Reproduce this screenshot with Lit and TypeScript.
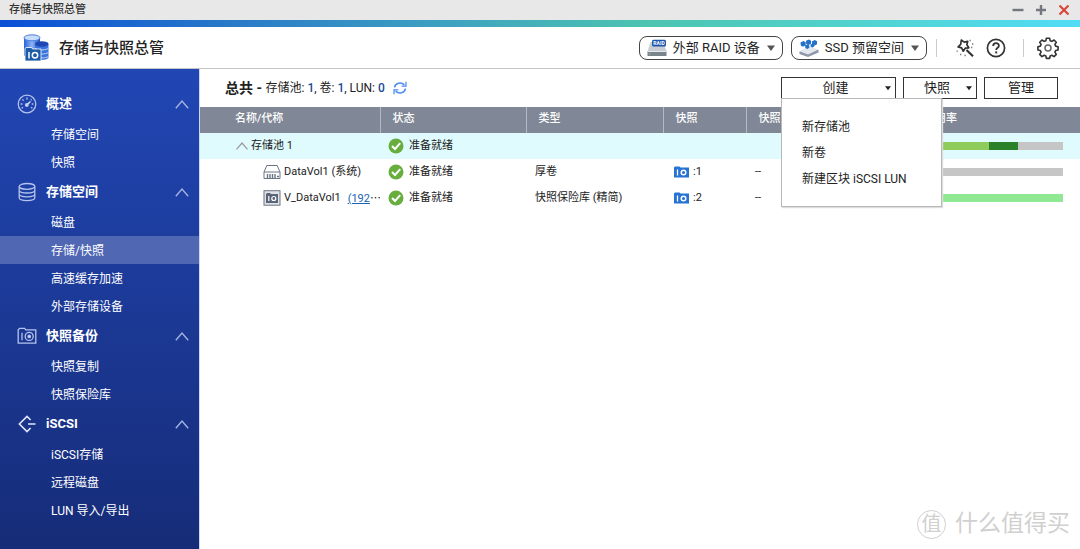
import { LitElement, html, css, svg, nothing } from "lit";
import { customElement, state } from "lit/decorators.js";

interface NavGroup {
  title: string;
  icon: unknown;
  items: string[];
}

interface Row {
  kind: "pool" | "volume" | "vault";
  name: string;
  alias?: string;
  status: string;
  type?: string;
  snapshots?: number;
  reserved?: string;
  bars: { color: string; width: number }[];
}

const gauge = svg`<svg width="20" height="20" viewBox="0 0 20 20" fill="none" stroke="#b4c3ec" stroke-width="1.3">
  <circle cx="10" cy="10" r="8.8"/><path d="M3.6 10h1.8M5.4 5.4l1.2 1.2M10 3.6v1.8M14.6 5.4l-.8.9M16.4 10h-1.6M6 13.4l-1.4.8M14 13.4l1.4.8"/>
  <circle cx="9.8" cy="11" r="1.3" fill="#dfe6fa"/><path d="M10.5 10.2l3-2.8" stroke="#dfe6fa"/></svg>`;

const disks = svg`<svg width="20" height="20" viewBox="0 0 20 20" fill="none" stroke="#b4c3ec" stroke-width="1.3">
  <ellipse cx="10" cy="4.4" rx="7.8" ry="2.9"/>
  <path d="M2.2 4.4v11.4c0 1.6 3.5 2.8 7.8 2.8s7.8-1.2 7.8-2.8V4.4M2.2 8.2c0 1.6 3.5 2.8 7.8 2.8s7.8-1.2 7.8-2.8M2.2 12c0 1.6 3.5 2.8 7.8 2.8s7.8-1.2 7.8-2.8"/></svg>`;

const camera = svg`<svg width="20" height="20" viewBox="0 0 20 20" fill="none" stroke="#b4c3ec" stroke-width="1.3">
  <path d="M1.2 17.2V3.8l1.4-1.4h5l1.2 1.4h10v13.4z"/><path d="M5 6.8v7.4"/>
  <circle cx="12.2" cy="10.4" r="4"/><circle cx="12.2" cy="10.4" r="1.2" fill="#dfe6fa"/></svg>`;

const iscsi = svg`<svg width="20" height="20" viewBox="0 0 20 20" fill="none" stroke="#dfe6fa" stroke-width="1.6">
  <path d="M13.6 6L10 2.4 2.4 10l7.600 7.600 3.600-3.600M11 10h7.500"/></svg>`;

const chevron = (w: number, h: number, color: string) => svg`<svg width=${w} height=${h} viewBox="0 0 12 8" fill="none" stroke=${color} stroke-width="1.2"><path d="M.5 7.3L6 1l5.5 6.3"/></svg>`;

const caret = (w: number) => svg`<svg width=${w} height=${w} viewBox="0 0 8 8" fill="currentColor"><path d="M0 1.500h8L4 7z"/></svg>`;

const appLogo = svg`<svg width="26" height="28" viewBox="0 0 26 28">
  <defs><linearGradient id="a" x1="0" x2="1"><stop offset="0" stop-color="#2a62d8"/><stop offset=".5" stop-color="#8cb4f6"/><stop offset="1" stop-color="#2450c4"/></linearGradient></defs>
  <path d="M1 3.5v18c2 2 14 2 16 0v-18z" fill="url(#a)"/><ellipse cx="9" cy="3.8" rx="8" ry="3" fill="#c7dbfb" stroke="#4b7fe0"/>
  <path d="M12 10v14c2 2.5 11.5 2.5 13.5 0V10z" fill="#3c74de"/><ellipse cx="18.7" cy="10" rx="6.8" ry="2.7" fill="#1f48b4"/>
  <path d="M12 14.5c3 2 10 2 13.5 0M12 18.5c3 2 10 2 13.5 0M12 22.5c3 2 10 2 13.5 0" fill="none" stroke="#b9d0f8"/>
  <path d="M2 15l1-1.5h5.5l1 1.5H18v12H2z" fill="#1a5ca6" stroke="#fff" stroke-width=".8"/>
  <path d="M6 18v6.5" stroke="#fff" stroke-width="1.5"/><circle cx="12" cy="21.2" r="2.7" fill="none" stroke="#fff" stroke-width="1.5"/></svg>`;

const raidIcon = svg`<svg width="20" height="18" viewBox="0 0 20 18">
  <path d="M3.5 3h13l3 9.5H.5z" fill="#c9cdd3"/><path d="M.5 12.300h19v4.700H.5z" fill="#7b838d"/><path d="M1 12.500h18" stroke="#e6e9ed"/>
  <circle cx="2.8" cy="14.9" r=".7" fill="#8fe05a"/><rect x="5" y=".8" width="14" height="6.800" rx="1.5" fill="#1c56ac"/>
  <text x="12" y="6.100" text-anchor="middle" font-family="Roboto, sans-serif" font-weight="700" font-size="5" fill="#fff">RAID</text></svg>`;

const ssdIcon = svg`<svg width="20" height="18" viewBox="0 0 20 18">
  <path d="M.5 12.500L10 8l9.500 3v2.500L9 18l-8.500-3z" fill="#8e97a8"/><path d="M.5 12.300L10 7.500l9.500 3L9 15.500z" fill="#e3e7ee"/>
  <path d="M1.500 3.500l3-1.500 2.200 1.300v3L4 7.800 1.800 6.500zM7 1.800L10 .5l2 1.300v3L9.500 6 7.200 5zM12.800 2.500l3-1.500L18 2.300v3l-2.500 1.400-2.300-1.200zM6.200 6.500l2.300-1 1.800 1v2.300L8.300 10l-2-1zM11.500 5.500l2-.8 1.500 1v2l-1.800.8-1.600-.9z" fill="#2371c8"/></svg>`;

const wand = svg`<svg width="20" height="20" viewBox="0 0 20 20" fill="none" stroke="#333" stroke-width="1.7" stroke-linejoin="round">
  <path d="M6.300 2l2.900 2.100 3.500-.8-.8 3.500 1.900 3-3.600.4-2 3-1.600-3.300-3.500-1 2.600-2.600z"/><path d="M11.500 12l6.500 6.200" stroke-width="2.2"/>
  <path d="M14.500 2.500h1.300M17 6h1.300M16 9.500h1.300M1.5 13.200h1.300M5 16.500h1.300M9.500 17.500h1.300" stroke="#777" stroke-width="1.3"/></svg>`;

const help = svg`<svg width="20" height="20" viewBox="0 0 20 20" fill="none" stroke="#333" stroke-width="1.7">
  <circle cx="10" cy="10" r="8.6"/><path d="M7.200 8c0-3.700 5.700-3.600 5.700-.3 0 2-2.700 2.200-2.700 4.300" stroke-width="1.8"/><path d="M9.200 14.400h2" stroke-width="2"/></svg>`;

const gear = svg`<svg width="24" height="24" viewBox="0 0 24 24" fill="none" stroke="#333" stroke-width="1.8" stroke-linejoin="round">
  <path d="M10.200 1.800h3.600l.6 2.700 1.900.8 2.400-1.500 2.500 2.500-1.500 2.400.8 1.900 2.700.6v3.600l-2.700.6-.8 1.900 1.500 2.400-2.500 2.500-2.400-1.500-1.900.8-.6 2.700h-3.600l-.6-2.700-1.900-.8-2.400 1.500-2.500-2.500 1.500-2.400-.8-1.900-2.700-.6v-3.600l2.700-.6.8-1.900-1.500-2.400 2.500-2.500 2.400 1.500 1.900-.8z" transform="translate(1.200 .6) scale(.9)"/>
  <circle cx="12" cy="12" r="3" stroke="#666" stroke-width="1.500"/></svg>`;

const refresh = svg`<svg width="14" height="14" viewBox="0 0 14 14" fill="none" stroke="#4d8df0" stroke-width="1.6">
  <path d="M1.600 6.300C2 2.500 8 .2 11.400 4M12.400 7.700C12 11.500 6 13.800 2.600 10"/><path d="M13 .8v4.400H8.600M1 13.200V8.800h4.400" stroke-width="1.3"/></svg>`;

const check = svg`<svg width="16" height="16" viewBox="0 0 16 16"><circle cx="8" cy="8" r="7.5" fill="#67ae3f"/>
  <path d="M4 8l3 3 5.200-5.800" fill="none" stroke="#fff" stroke-width="2"/></svg>`;

const volumeIcon = svg`<svg width="18" height="16" viewBox="0 0 18 16" fill="none" stroke="#6d7585">
  <path d="M1 8l2.800-6.500h10.400L17 8v6.500H1z"/><path d="M1 8h16"/><path d="M4.500 10v4M7 10v4M9.500 10v4M12 10v4" stroke-width="1.4"/><path d="M14 12.500h2" stroke-width="1.4"/></svg>`;

const vaultIcon = svg`<svg width="18" height="16" viewBox="0 0 18 16" fill="none">
  <rect x="1" y=".7" width="16" height="14.5" fill="#dfe2e8" stroke="#6d7585"/><path d="M3 4l1-1h3l1 1h7v9H3z" fill="#5b6578"/>
  <path d="M5.800 6v5" stroke="#fff" stroke-width="1.2"/><circle cx="10.8" cy="8.5" r="2" stroke="#fff" stroke-width="1.2"/></svg>`;

const snapIcon = svg`<svg width="15" height="12" viewBox="0 0 15 12" fill="none"><path d="M0 1.500L1 .5h4.500l1 1H15v10H0z" fill="#2673d4"/>
  <path d="M3.500 3.500v6" stroke="#fff" stroke-width="1.3"/><circle cx="9.5" cy="6.5" r="2.3" stroke="#fff" stroke-width="1.5"/></svg>`;

const NAV: NavGroup[] = [
  { title: "概述", icon: gauge, items: ["存储空间", "快照"] },
  { title: "存储空间", icon: disks, items: ["磁盘", "存储/快照", "高速缓存加速", "外部存储设备"] },
  { title: "快照备份", icon: camera, items: ["快照复制", "快照保险库"] },
  { title: "iSCSI", icon: iscsi, items: ["iSCSI存储", "远程磁盘", "LUN 导入/导出"] },
];

const ROWS: Row[] = [
  {
    kind: "pool", name: "存储池 1", status: "准备就绪",
    bars: [{ color: "#8fcc5c", width: 49 }, { color: "#2b8127", width: 20 }],
  },
  { kind: "volume", name: "DataVol1 (系统)", status: "准备就绪", type: "厚卷", snapshots: 1, reserved: "--", bars: [] },
  {
    kind: "vault", name: "V_DataVol1", alias: "(192", status: "准备就绪", type: "快照保险库 (精简)", snapshots: 2, reserved: "--",
    bars: [{ color: "#90e892", width: 100 }],
  },
];

@customElement("app-root")
export class AppRoot extends LitElement {
  @state() private menuOpen = true;
  @state() private active = "存储/快照";

  static styles = css`
    :host {
      display: flex;
      flex-direction: column;
      min-height: 100vh;
      box-sizing: border-box;
      position: relative;
      background: #fff;
      color: #222;
      font: 12px/20px Roboto, "Noto Sans CJK SC", sans-serif;
    }
    * { box-sizing: border-box; }
    svg { display: block; flex: none; }
    button { font: inherit; color: inherit; background: none; border: 0; padding: 0; cursor: pointer; }
    .titlebar {
      display: flex; align-items: center; justify-content: space-between;
      height: 20px; padding: 0 10px 0 9px; background: #e8e8e8; font-weight: 500; font-size: 11px; line-height: 22px; color: #333;
    }
    .window { display: flex; gap: 11px; }
    .stripe { height: 7px; background: linear-gradient(90deg, #0a4ed6 0%, #2a7bc8 22%, #3fa3c0 42%, #4cc4b0 60%, #50d2cc 78%, #52dcf6 100%); }
    header { display: flex; align-items: center; height: 42px; padding: 0 20px 0 23px; border-bottom: 1px solid #c4c4c8; }
    h1 { margin: 0 auto 0 10px; font-size: 15px; font-weight: 500; line-height: 20px; }
    .pill {
      display: flex; align-items: center; height: 24px; margin-right: 8px; padding: 0 7px;
      border: 1px solid #444; border-radius: 8px; font-size: 13px; white-space: nowrap;
    }
    .pill span { margin: 0 7px 0 6px; }
    .pill svg:last-child { color: #555; }
    .sep { width: 1px; height: 18px; background: #ccc; }
    .tools { display: flex; align-items: center; }
    .tools .sep:first-child { margin: 0 18px 0 1px; }
    .tools .help { margin: 0 17px 0 11px; }
    .tools .gear { margin-left: 12px; }
    .body { display: flex; flex: 1; }
    nav { flex: none; width: 200px; padding-top: 19px; background: linear-gradient(#2146b4, #162c78); border-right: 1px solid #ccd8f4; color: #fff; }
    .group { display: flex; align-items: center; width: 100%; height: 32px; padding: 0 10px 0 17px; font-size: 13px; font-weight: 700; text-align: left; }
    .group span { flex: 1; margin-left: 9px; }
    nav a { display: block; height: 28px; padding: 1px 0 0 51px; line-height: 28px; color: #fff; text-decoration: none; }
    nav a.on { background: #5067b4; }
    main { flex: 1; min-width: 0; }
    .bar { display: flex; align-items: center; height: 38px; padding: 0 22px 0 25px; }
    .bar p { display: flex; align-items: center; margin: 0 auto 0 0; white-space: pre; }
    .bar strong { font-size: 14px; font-weight: 700; }
    .bar b { font-weight: 500; color: #1c4a94; }
    .bar p button { margin-left: 8px; }
    .menu-wrap { position: relative; margin-right: 7px; }
    .btn { display: flex; align-items: center; height: 22px; width: 74px; border: 1px solid #333; background: #fff; font-size: 13px; padding: 0 4px; }
    .btn span { flex: 1; }
    .wide { width: 115px; }
    .gap { margin-right: 7px; }
    .menu {
      position: absolute; z-index: 2; top: 21px; left: 0; width: 161px; margin: 0; padding: 15px 0 14px; list-style: none;
      background: #fff; border: 1px solid #b8b8b8; box-shadow: 1px 1px 1px #ddd;
    }
    .menu button { display: block; width: 100%; height: 26px; padding-left: 20px; text-align: left; white-space: nowrap; }
    table { width: 100%; border-collapse: collapse; table-layout: fixed; font-size: 11px; }
    tr { height: 26px; }
    th, td { padding: 0 0 0 9px; text-align: left; white-space: nowrap; overflow: hidden; }
    th { padding: 0 0 2px 12px; background: #808796; color: #fff; font-weight: 500; border-left: 1px solid #b4b9c4; }
    th:first-child { padding-left: 35px; border-left: 0; }
    th:last-child { padding-left: 15px; border-left: 0; }
    .c1 { width: 180px; } .c2 { width: 146px; } .c3 { width: 137px; } .c4 { width: 83px; } .c5 { width: 163px; }
    .pool { background: #e0fbfd; }
    .cell { display: flex; align-items: center; gap: 3px; }
    td:first-child { padding-left: 63px; }
    .pool td:first-child { padding-left: 36px; }
    td:nth-child(2) { padding-left: 8px; }
    td:nth-child(2) .cell { gap: 5px; }
    td:nth-child(4) { padding-left: 11px; }
    .snap { gap: 4px; }
    .alias { margin-left: 4px; }
    .alias i { font-family: "Noto Sans CJK SC", sans-serif; font-style: normal; }
    .cell a { color: #1a63b4; }
    .meter { display: flex; height: 8px; margin-right: 17px; background: #c6c6c6; }
    .mark { position: absolute; right: 10px; bottom: 9px; display: flex; align-items: center; gap: 9px; color: #d0d0d0; font-size: 23px; line-height: 32px; }
    .mark i { width: 29px; height: 29px; border: 1px solid #d0d0d0; border-radius: 50%; font-size: 20px; font-style: normal; line-height: 26px; text-align: center; }
  `;

  private pick(event: Event, item: string) {
    event.preventDefault();
    this.active = item;
  }

  private renderRow(r: Row) {
    return html`<tr class=${r.kind}>
      <td><div class="cell">
        ${r.kind === "pool" ? chevron(12, 8, "#999") : r.kind === "volume" ? volumeIcon : vaultIcon}
        <span>${r.name}</span>${r.alias ? html`<span class="alias"><a href="#">${r.alias}</a><i>…</i></span>` : nothing}
      </div></td>
      <td><div class="cell">${check}<span>${r.status}</span></div></td>
      <td>${r.type ?? nothing}</td>
      <td>${r.snapshots ? html`<div class="cell snap">${snapIcon}<span>:${r.snapshots}</span></div>` : nothing}</td>
      <td>${r.reserved ?? nothing}</td>
      <td><div class="meter">${r.bars.map((b) => html`<div style="width:${b.width}%;background:${b.color}"></div>`)}</div></td>
    </tr>`;
  }

  render() {
    return html`
      <div class="titlebar">
        <span>存储与快照总管</span>
        <div class="window">
          <button aria-label="最小化"><svg width="12" height="12" viewBox="0 0 12 12"><path d="M.5 6h11" stroke="#73777f" stroke-width="2.4"/></svg></button>
          <button aria-label="最大化"><svg width="12" height="12" viewBox="0 0 12 12"><path d="M1 6h10M6 1v10" stroke="#73777f" stroke-width="2.4"/></svg></button>
          <button aria-label="关闭"><svg width="12" height="12" viewBox="0 0 12 12"><path d="M1.500 1.500l9 9M10.500 1.500l-9 9" stroke="#d9463c" stroke-width="2.2"/></svg></button>
        </div>
      </div>
      <div class="stripe"></div>
      <header>
        ${appLogo}
        <h1>存储与快照总管</h1>
        <button class="pill">${raidIcon}<span>外部 RAID 设备</span>${caret(8)}</button>
        <button class="pill">${ssdIcon}<span>SSD 预留空间</span>${caret(8)}</button>
        <div class="tools">
          <div class="sep"></div>
          <button aria-label="工具">${wand}</button>
          <button class="help" aria-label="帮助">${help}</button>
          <div class="sep"></div>
          <button class="gear" aria-label="设置">${gear}</button>
        </div>
      </header>
      <div class="body">
        <nav>
          ${NAV.map((g) => html`
            <button class="group">${g.icon}<span>${g.title}</span>${chevron(14, 9, "#a5b5e2")}</button>
            ${g.items.map((i) => html`<a href="#" class=${i === this.active ? "on" : ""} @click=${(e: Event) => this.pick(e, i)}>${i}</a>`)}
          `)}
        </nav>
        <main>
          <div class="bar">
            <p><strong>总共 - </strong>存储池: <b>1</b>, 卷: <b>1</b>, LUN: <b>0</b><button aria-label="刷新">${refresh}</button></p>
            <div class="menu-wrap">
              <button class="btn wide" aria-expanded=${this.menuOpen} @click=${() => (this.menuOpen = !this.menuOpen)}><span>创建</span>${caret(6)}</button>
              ${this.menuOpen
                ? html`<ul class="menu">
                    <li><button>新存储池</button></li>
                    <li><button>新卷</button></li>
                    <li><button>新建区块 iSCSI LUN</button></li>
                  </ul>`
                : nothing}
            </div>
            <button class="btn gap"><span>快照</span>${caret(6)}</button>
            <button class="btn"><span>管理</span></button>
          </div>
          <table>
            <thead><tr>
              <th class="c1">名称/代称</th><th class="c2">状态</th><th class="c3">类型</th><th class="c4">快照</th><th class="c5">快照</th><th>使用率</th>
            </tr></thead>
            <tbody>${ROWS.map((r) => this.renderRow(r))}</tbody>
          </table>
        </main>
      </div>
      <div class="mark"><i>值</i><span>什么值得买</span></div>
    `;
  }
}
